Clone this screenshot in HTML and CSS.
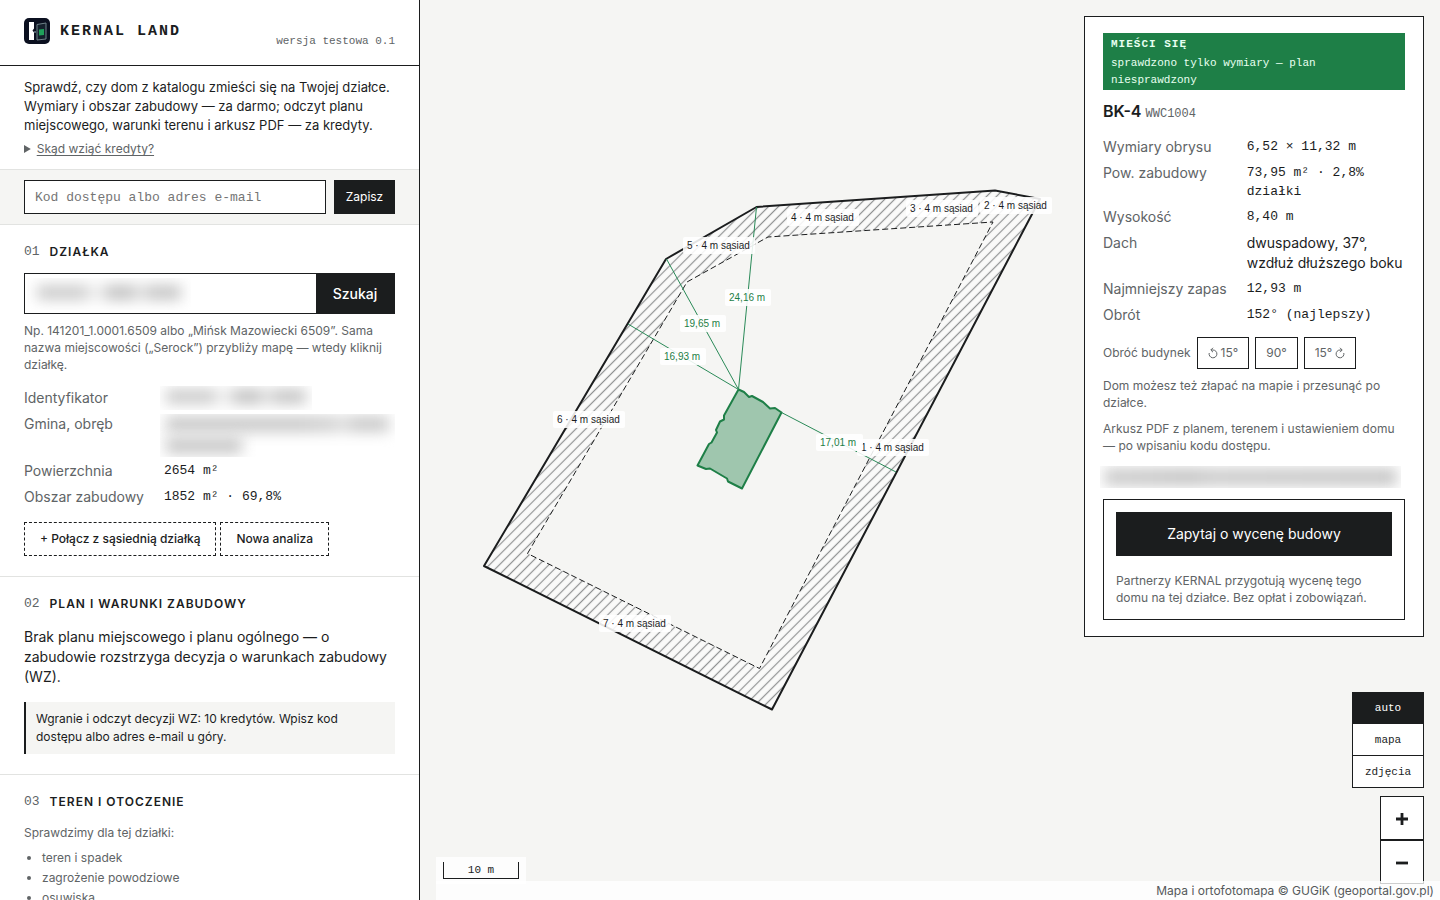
FILE: index.html
```html
<!DOCTYPE html>
<html lang="pl">
<head>
<meta charset="utf-8">
<title>KERNAL LAND</title>
<meta name="viewport" content="width=device-width, initial-scale=1">
<link rel="stylesheet" href="styles.css">
</head>
<body>
<div class="app">
  <aside class="sidebar">
    <header class="brand">
      <svg class="logo" width="26" height="26" viewBox="0 0 26 26" aria-hidden="true">
        <rect width="26" height="26" rx="5" fill="#0b1020"/>
        <path d="M5 4h5v6.500L8.500 12.500 10 14.500V22H5z" fill="#fff"/>
        <path d="M13 6.500 22 5v16l-9 1z" fill="#14202c" stroke="#6f8188" stroke-width="1"/>
        <path d="M15 11.500 20 11v6l-5 .5z" fill="#1fa05a"/>
        <circle cx="11" cy="14" r="1" fill="#6f8188"/>
      </svg>
      <h1 class="brand-name">KERNAL LAND</h1>
      <span class="version">wersja testowa 0.1</span>
    </header>

    <div class="intro">
      <p class="lead">Sprawdź, czy dom z katalogu zmieści się na Twojej działce. Wymiary i obszar zabudowy — za darmo; odczyt planu miejscowego, warunki terenu i arkusz PDF — za kredyty.</p>
      <details class="credits"><summary><span class="credits-link">Skąd wziąć kredyty?</span></summary></details>
    </div>

    <form class="access">
      <input class="access-input" type="text" aria-label="Kod dostępu albo adres e-mail" placeholder="Kod dostępu albo adres e-mail">
      <button class="btn-dark access-save" type="button">Zapisz</button>
    </form>

    <section class="step">
      <h2 class="step-title"><span class="step-no">01</span>DZIAŁKA</h2>
      <form class="search">
        <div class="search-field">
          <input class="search-input" type="text" aria-label="Działka">
          <span class="redacted redacted-search"><i class="smudge smudge-id"></i></span>
        </div>
        <button class="btn-dark search-go" type="button">Szukaj</button>
      </form>
      <p class="hint">Np. 141201_1.0001.6509 albo „Mińsk Mazowiecki 6509”. Sama nazwa miejscowości („Serock”) przybliży mapę — wtedy kliknij działkę.</p>
      <dl class="facts">
        <dt>Identyfikator</dt><dd><span class="redacted redacted-id"><i class="smudge smudge-id"></i></span></dd>
        <dt>Gmina, obręb</dt><dd><span class="redacted redacted-area"><i class="smudge smudge-long"></i><i class="smudge smudge-short"></i></span></dd>
        <dt>Powierzchnia</dt><dd class="mono">2654 m²</dd>
        <dt>Obszar zabudowy</dt><dd class="mono">1852 m² · 69,8%</dd>
      </dl>
      <div class="plot-actions">
        <button class="btn-dashed" type="button">+ Połącz z sąsiednią działką</button>
        <button class="btn-dashed" type="button">Nowa analiza</button>
      </div>
    </section>

    <section class="step">
      <h2 class="step-title"><span class="step-no">02</span>PLAN I WARUNKI ZABUDOWY</h2>
      <p class="plan-text">Brak planu miejscowego i planu ogólnego — o zabudowie rozstrzyga decyzja o warunkach zabudowy (WZ).</p>
      <p class="note">Wgranie i odczyt decyzji WZ: 10 kredytów. Wpisz kod dostępu albo adres e-mail u góry.</p>
    </section>

    <section class="step">
      <h2 class="step-title"><span class="step-no">03</span>TEREN I OTOCZENIE</h2>
      <p class="checks-title">Sprawdzimy dla tej działki:</p>
      <ul class="checks">
        <li>teren i spadek</li>
        <li>zagrożenie powodziowe</li>
        <li>osuwiska</li>
      </ul>
    </section>
  </aside>

  <main class="map">
    <svg class="plot" viewBox="420 0 1020 900" role="img" aria-label="Działka z obrysem domu">
      <defs>
        <pattern id="hatch" width="7" height="7" patternUnits="userSpaceOnUse" patternTransform="rotate(45)">
          <rect width="7" height="7" fill="#fafaf9"/>
          <path d="M3.500 0V7" stroke="#919393" stroke-width="1.200"/>
        </pattern>
      </defs>
      <path class="setback" fill-rule="evenodd" d="M484 566 666 259 756.500 207 995 190.500 1040 199 772 709.500ZM527.500 553.500 687 282 768 237 993 222 759.500 668.500Z"/>
      <path class="inner" d="M527.500 553.500 687 282 768 237 993 222 759.500 668.500Z"/>
      <path class="outer" d="M484 566 666 259 756.500 207 995 190.500 1040 199 772 709.500Z"/>
      <path class="house" d="M738.500 389.500 744 392 749 397 752 396 763 402 770 408.500 775 408 781.500 412.500 742 488.500 728 481.500 727 478.500 710 468.500 706 469 697.500 465.500 709 444 711.500 442.500 717 432.500 716 430 720 421.500 724 419.500 724 415.500Z"/>
      <path class="measure" d="M738.500 389.500 756.500 207M738.500 389.500 666.500 259M738.500 389.500 628 324M781.500 412.500 896 472"/>
      <g class="edge">
        <rect x="787" y="209" width="72" height="17" rx="2"/><text x="791" y="221">4 · 4 m sąsiad</text>
        <rect x="906" y="200" width="72" height="17" rx="2"/><text x="910" y="212">3 · 4 m sąsiad</text>
        <rect x="980" y="197" width="72" height="17" rx="2"/><text x="984" y="209">2 · 4 m sąsiad</text>
        <rect x="683" y="237" width="72" height="17" rx="2"/><text x="687" y="249">5 · 4 m sąsiad</text>
        <rect x="553" y="411" width="72" height="17" rx="2"/><text x="557" y="423">6 · 4 m sąsiad</text>
        <rect x="599" y="615" width="72" height="17" rx="2"/><text x="603" y="627">7 · 4 m sąsiad</text>
        <rect x="857" y="439" width="72" height="17" rx="2"/><text x="861" y="451">1 · 4 m sąsiad</text>
      </g>
      <g class="distance">
        <rect x="725" y="289" width="46" height="17" rx="2"/><text x="729" y="301">24,16 m</text>
        <rect x="680" y="315" width="46" height="17" rx="2"/><text x="684" y="327">19,65 m</text>
        <rect x="660" y="348" width="46" height="17" rx="2"/><text x="664" y="360">16,93 m</text>
        <rect x="816" y="434" width="47" height="17" rx="2"/><text x="820" y="446">17,01 m</text>
      </g>
    </svg>

    <div class="controls">
      <div class="layers">
        <button class="layer layer-on" type="button">auto</button>
        <button class="layer" type="button">mapa</button>
        <button class="layer" type="button">zdjęcia</button>
      </div>
      <div class="zoom">
        <button class="zoom-btn" type="button" aria-label="Przybliż"><svg width="14" height="14" viewBox="0 0 14 14"><path d="M1 7H13M7 1V13"/></svg></button>
        <button class="zoom-btn" type="button" aria-label="Oddal"><svg width="14" height="14" viewBox="0 0 14 14"><path d="M1 7H13"/></svg></button>
      </div>
    </div>
    <div class="scale"><div class="scale-bar">10 m</div></div>
    <div class="attribution">Mapa i ortofotomapa © GUGiK (geoportal.gov.pl)</div>

    <article class="result">
      <div class="verdict"><strong>MIEŚCI SIĘ</strong><span>sprawdzono tylko wymiary — plan niesprawdzony</span></div>
      <h3 class="house-name">BK-4 <small>WWC1004</small></h3>
      <dl class="facts">
        <dt>Wymiary obrysu</dt><dd class="mono">6,52 × 11,32 m</dd>
        <dt>Pow. zabudowy</dt><dd class="mono">73,95 m² · 2,8% działki</dd>
        <dt>Wysokość</dt><dd class="mono">8,40 m</dd>
        <dt>Dach</dt><dd>dwuspadowy, 37°, wzdłuż dłuższego boku</dd>
        <dt>Najmniejszy zapas</dt><dd class="mono">12,93 m</dd>
        <dt>Obrót</dt><dd class="mono">152° (najlepszy)</dd>
      </dl>
      <div class="rotate">
        <span>Obróć budynek</span>
        <button class="rotate-btn" type="button"><svg width="10" height="12" viewBox="0 0 10 12"><path d="M3 3H5A3.900 3.900 0 1 1 1.200 6M5 .8 2.800 3 5 5.200"/></svg>15°</button>
        <button class="rotate-btn" type="button">90°</button>
        <button class="rotate-btn" type="button">15°<svg width="10" height="12" viewBox="0 0 10 12"><path d="M7 3H5A3.900 3.900 0 1 0 8.800 6M5 .8 7.200 3 5 5.200"/></svg></button>
      </div>
      <p class="tip">Dom możesz też złapać na mapie i przesunąć po działce.</p>
      <p class="tip">Arkusz PDF z planem, terenem i ustawieniem domu — po wpisaniu kodu dostępu.</p>
      <span class="redacted redacted-line"><i class="smudge smudge-line"></i></span>
      <div class="offer">
        <button class="btn-dark offer-btn" type="button">Zapytaj o wycenę budowy</button>
        <p>Partnerzy KERNAL przygotują wycenę tego domu na tej działce. Bez opłat i zobowiązań.</p>
      </div>
    </article>
  </main>
</div>
</body>
</html>
```

FILE: styles.css
```css
:root {
  --ink: #1b1d1e;
  --muted: #606466;
  --paper: #f5f5f3;
  --line: #e2e3e1;
  --green: #1e7f47;
  --sans: Inter, "Liberation Sans", sans-serif;
  --mono: "Liberation Mono", monospace;
}
* { box-sizing: border-box; }
body { margin: 0; font: 14px/20px var(--sans); color: var(--ink); background: var(--paper); }
h1, h2, h3, p, dl, dd, ul { margin: 0; }
button, input { font: inherit; color: inherit; margin: 0; border-radius: 0; }
button { cursor: pointer; }
.mono { font: 13px/19px var(--mono); }

.app { display: grid; grid-template-columns: 420px 1fr; height: 100vh; overflow: hidden; }
.sidebar { background: #fff; border-right: 1px solid var(--ink); overflow: hidden; min-height: 0; }

.brand { display: flex; align-items: flex-start; gap: 10px; padding: 18px 24px 17px; border-bottom: 1px solid var(--ink); }
.logo { display: block; }
.brand-name { font: 700 15px/28px var(--mono); letter-spacing: 2px; }
.version { margin-left: auto; padding-top: 16px; font: 11px/14px var(--mono); color: var(--muted); }

.intro { padding: 12px 24px 11px; border-bottom: 1px solid var(--line); }
.lead { font-size: 13px; line-height: 19px; }
.credits { margin-top: 5px; font-size: 12px; line-height: 18px; color: var(--muted); }
.credits summary { cursor: pointer; }
.credits-link { text-decoration: underline; text-underline-offset: 2px; }

.btn-dark { background: var(--ink); color: #fff; border: 1px solid var(--ink); padding: 0; }
.access { display: flex; gap: 8px; padding: 10px 24px; background: var(--paper); border-bottom: 1px solid var(--line); }
.access-input { flex: 1; min-width: 0; height: 34px; padding: 0 10px; background: #fff; border: 1px solid var(--ink); font: 13px var(--mono); }
.access-input::placeholder { color: #757575; opacity: 1; }
.access-save { width: 61px; font-size: 12px; }

.step { padding: 18px 24px 20px; border-bottom: 1px solid var(--line); }
.step-title { display: flex; gap: 10px; font-size: 12px; line-height: 18px; font-weight: 600; letter-spacing: 1px; }
.step-no { font: 13px/18px var(--mono); color: var(--muted); letter-spacing: 0; }

.search { display: flex; margin-top: 12px; border: 1px solid var(--ink); }
.search-field { position: relative; flex: 1; min-width: 0; }
.search-input { display: block; width: 100%; height: 39px; border: 0; padding: 0 10px; background: #fff; font: 13px var(--mono); }
.search-go { width: 78px; border: 0; font-weight: 500; }
.hint { margin-top: 8px; font-size: 12px; line-height: 17px; color: var(--muted); }

.facts { display: grid; grid-template-columns: max-content 1fr; column-gap: 20px; row-gap: 6px; }
.facts dt { color: var(--muted); }
.step .facts { margin-top: 15px; }

.redacted { display: block; overflow: hidden; }
.smudge { display: block; filter: blur(7px); }
.redacted-search { position: absolute; left: 2px; top: 4px; width: 164px; height: 32px; padding: 7px 10px; }
.redacted-id { width: 152px; height: 24px; margin: -2px 0 -2px -4px; padding: 3px 6px; }
.redacted-area { height: 43px; margin: 0 0 -2px -4px; padding: 2px 6px; }
.smudge-id { height: 15px; background: linear-gradient(90deg, #ccc 0 32%, #eee 38% 45%, #c2c2c2 50% 66%, #e2e2e2 70% 74%, #c6c6c6 78%); }
.smudge-long { height: 16px; background: linear-gradient(90deg, #cacaca 0 60%, #d2d2d2 75%, #e2e2e2 80%, #cbcbcb 84%); }
.smudge-short { height: 17px; width: 76px; margin-top: 5px; background: #cacaca; }
.redacted-line { height: 22px; margin: 11px 4px 11px -3px; padding: 2px 4px; }
.smudge-line { height: 18px; background: linear-gradient(90deg, #cecece, #c6c6c6 30%, #cdcdcd 36%, #c8c8c8); }

.plot-actions { display: flex; gap: 4px; margin-top: 15px; }
.btn-dashed { height: 34px; padding: 0 15px; background: none; border: 1px dashed var(--ink); font-size: 12px; font-weight: 500; }

.plan-text { margin-top: 14px; }
.note { margin-top: 15px; padding: 8px 10px; border-left: 2px solid var(--ink); background: var(--paper); font-size: 12px; line-height: 18px; }

.checks-title { margin-top: 13px; font-size: 12px; line-height: 18px; color: var(--muted); }
.checks { margin-top: 6px; padding-left: 18px; font-size: 12px; line-height: 20px; color: var(--muted); }

.map { position: relative; min-width: 0; background: var(--paper); overflow: hidden; }
.plot { position: absolute; inset: 0; width: 100%; height: 100%; }
.setback { fill: url(#hatch); }
.outer { fill: none; stroke: var(--ink); stroke-width: 2; stroke-linejoin: round; }
.inner { fill: none; stroke: var(--ink); stroke-width: 1; stroke-dasharray: 6 3; }
.house { fill: #1e7f4766; stroke: var(--green); stroke-width: 2; stroke-linejoin: round; }
.measure { fill: none; stroke: #2a8a58; stroke-width: 1; }
.edge, .distance { font: 10px "Liberation Sans", sans-serif; fill: var(--ink); }
.edge rect, .distance rect { fill: #fff; fill-opacity: 0.88; }
.distance { fill: var(--green); }

.controls { position: absolute; right: 16px; bottom: 16px; display: flex; flex-direction: column; align-items: flex-end; gap: 8px; }
.layers { display: flex; flex-direction: column; width: 72px; border: 1px solid var(--ink); background: #fff; }
.layer { height: 32px; padding: 0; background: none; border: 0; border-bottom: 1px solid var(--ink); font: 11px var(--mono); }
.layer:first-child, .layer:last-child { height: 31px; }
.layer:last-child { border-bottom: 0; }
.layer-on { background: var(--ink); color: #fff; }
.zoom { display: flex; flex-direction: column; }
.zoom-btn { display: flex; align-items: center; justify-content: center; width: 44px; height: 44px; padding: 2px 0 0; background: #fff; border: 1px solid var(--ink); }
.zoom-btn path { stroke: var(--ink); stroke-width: 2.8; }

.scale { position: absolute; left: 16px; bottom: 16px; padding: 5px 7px; background: #fffc; }
.scale-bar { width: 76px; border: 1px solid var(--ink); border-top: 0; font: 11px/16px var(--mono); text-align: center; }
.attribution { position: absolute; left: 16px; right: 0; bottom: 0; padding: 1px 6px 0; background: #ffffffc8; font-size: 12px; line-height: 18px; text-align: right; color: #55595b; }

.result { position: absolute; top: 16px; right: 16px; width: 340px; padding: 16px 18px; background: #fff; border: 1px solid var(--ink); }
.verdict { padding: 3px 8px 1px; background: var(--green); color: #e8fff1; font: 11px/17px var(--mono); }
.verdict strong { display: block; letter-spacing: 1px; margin-bottom: 2px; }
.verdict span { display: block; }
.house-name { margin-top: 10px; font-size: 16px; line-height: 22px; font-weight: 600; }
.house-name small { font: 12px var(--mono); color: var(--muted); }
.result .facts { margin-top: 15px; }
.rotate { display: flex; align-items: center; gap: 6px; margin-top: 12px; font-size: 12px; color: var(--muted); }
.rotate-btn { display: flex; align-items: center; gap: 3px; height: 32px; padding: 0 10px; background: none; border: 1px solid var(--ink); }
.rotate-btn path { fill: none; stroke: currentColor; stroke-width: 1; }
.tip { margin-top: 9px; font-size: 12px; line-height: 17px; color: var(--muted); }
.rotate + .tip { margin-top: 8px; }
.redacted-line { margin-top: 12px; }
.offer { padding: 12px 12px 13px; border: 1px solid var(--ink); }
.offer-btn { display: block; width: 100%; height: 44px; }
.offer p { margin-top: 16px; font-size: 12px; line-height: 17px; color: var(--muted); }
```
